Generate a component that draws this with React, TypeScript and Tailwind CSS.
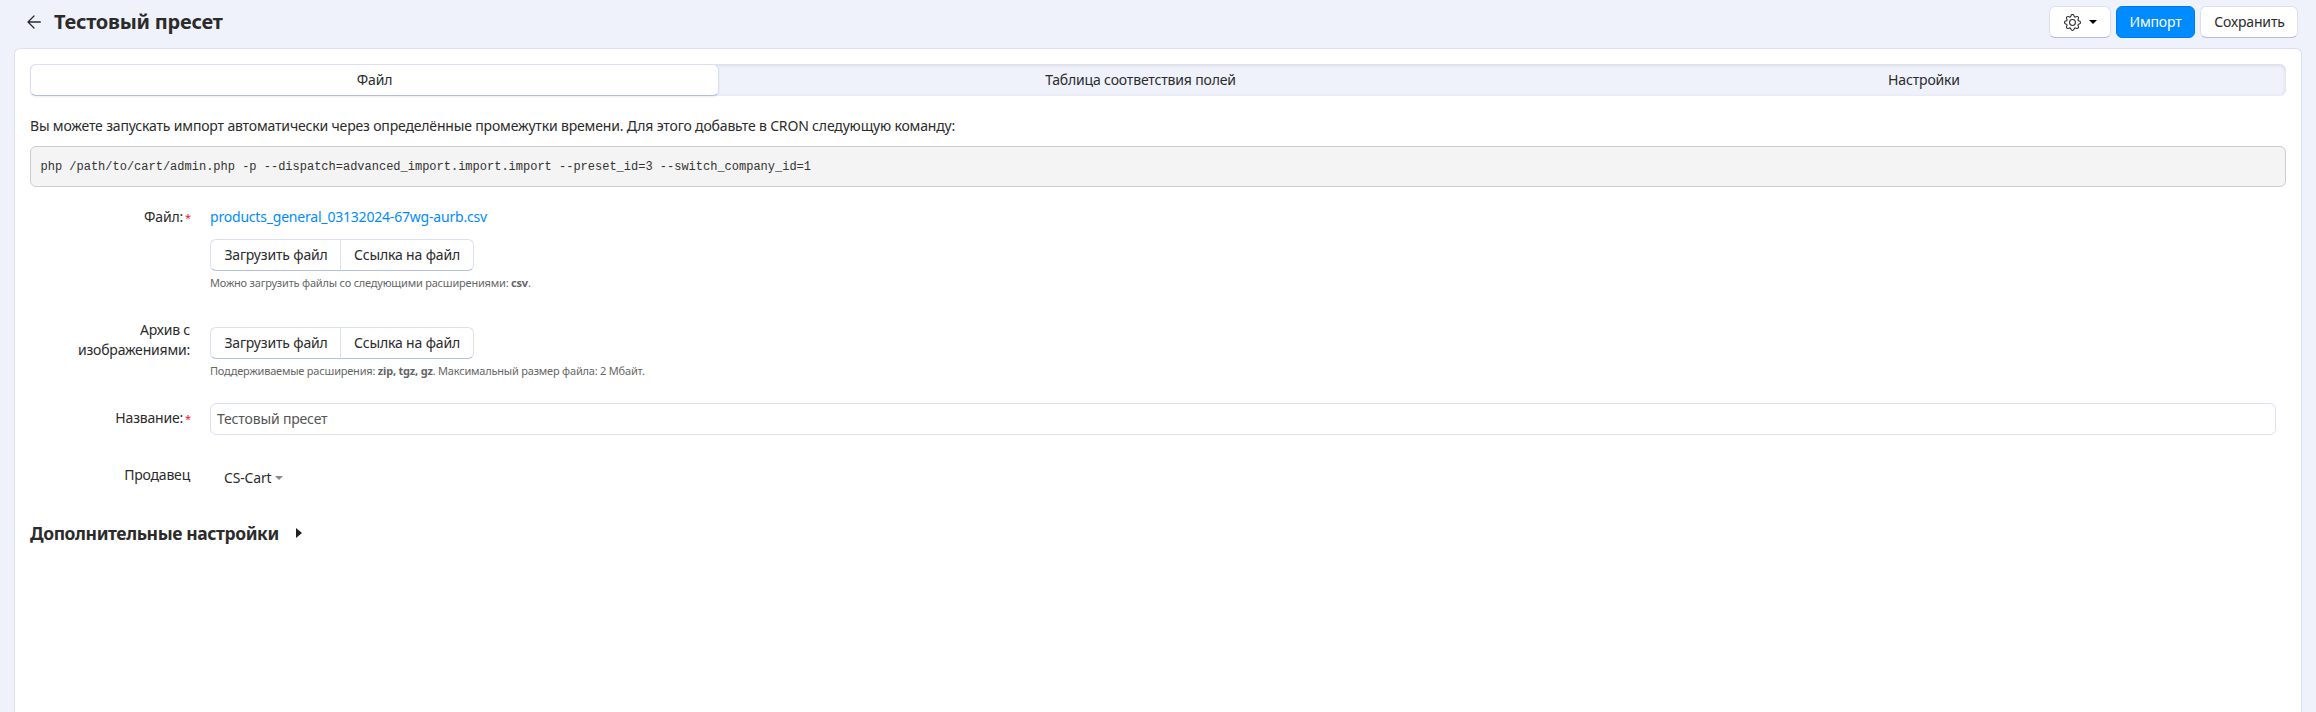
import type { ReactNode } from "react";
import { BsGear } from "react-icons/bs";

const raised = "border border-[#dbe0f0] border-b-[#b4bfdc] bg-white";

function UploadButtons() {
  return (
    <div className="flex h-8">
      <button className="h-8 w-[130px] rounded-l-[6px] border border-r-0 border-[#dbe0f0] border-b-[#b4bfdc] bg-white pl-px text-center leading-[30px] whitespace-nowrap">
        Загрузить файл
      </button>
      <button className={`h-8 w-[134px] rounded-r-[6px] text-center leading-[30px] whitespace-nowrap ${raised}`}>
        Ссылка на файл
      </button>
    </div>
  );
}

function Row({ label, required, className, children }: { label: string; required?: boolean; className: string; children: ReactNode }) {
  return (
    <div className={`flex ${className}`}>
      <label className="mr-5 w-40 shrink-0 text-right tracking-[-0.2px]">
        {label}
        {required && <span className="ml-[2px] inline-block w-[5px] text-[11px] leading-none tracking-normal text-[#f0103c]">*</span>}
      </label>
      <div className="min-w-0 flex-1">{children}</div>
    </div>
  );
}

const help = "text-[11px] leading-4 tracking-[-0.2px] text-[#666] whitespace-pre";

export default function App() {
  return (
    <div className="flex h-[712px] flex-col overflow-hidden bg-[#eff2fb] font-['Noto_Sans',sans-serif] text-[14px] leading-5 tracking-[-0.165px] text-[#2b2b2b]">
      <header className="flex h-12 shrink-0 items-start pt-[6px] pr-[18px] pl-[26px]">
        <svg className="mt-2 h-4 w-4" viewBox="0 0 16 16" fill="none" stroke="currentColor" strokeWidth="1.3" strokeLinecap="round" strokeLinejoin="round">
          <path d="M14.3 8H2.2M8 2L2 8l6 6" />
        </svg>
        <h1 className="ml-3 text-[20px] leading-8 font-bold tracking-[-0.24px]">Тестовый пресет</h1>
        <div className="ml-auto flex gap-[5px]">
          <button className={`flex h-8 w-[62px] items-center rounded-[6px] pl-[14px] ${raised}`}>
            <BsGear className="h-[17px] w-[17px]" />
            <svg className="ml-2 h-1 w-2" viewBox="0 0 8 4"><path d="M0 0h8L4 4z" fill="#000" /></svg>
          </button>
          <button className="h-8 w-[79px] rounded-[6px] border border-[#0078f5] bg-[#008cff] leading-[30px] text-white">Импорт</button>
          <button className={`h-8 w-[98px] rounded-[6px] pl-px leading-[30px] ${raised}`}>Сохранить</button>
        </div>
      </header>

      <main className="mx-[14px] flex-1 rounded-t-[6px] border border-b-0 border-[#dbe0f0] bg-white p-[15px]">
        <nav className="flex h-8 rounded-[6px] bg-[#eff2fb] text-center leading-[30px] shadow-[inset_0_1px_4px_rgba(0,0,0,0.12)]">
          <div className={`w-[689px] rounded-[6px] shadow-[0_1px_2px_rgba(80,100,160,0.12)] ${raised}`}>Файл</div>
          <div className="w-[843px] pt-px">Таблица соответствия полей</div>
          <div className="flex-1 pt-px">Настройки</div>
        </nav>

        <p className="mt-5 whitespace-nowrap">
          Вы можете запускать импорт автоматически через определённые промежутки времени. Для этого добавьте в CRON следующую команду:
        </p>
        <pre className="mt-[10px] h-[41px] rounded-[6px] border border-[#ccc] bg-[#f4f4f4] px-[9.5px] py-[9.5px] font-['Liberation_Mono',monospace] text-[12px] leading-5 tracking-normal text-[#333]">
          {"php /path/to/cart/admin.php -p --dispatch=advanced_import.import.import --preset_id=3 --switch_company_id=1"}
        </pre>

        <Row label="Файл:" required className="mt-5 h-[113px]">
          <a className="block tracking-[-0.2px] text-[#008cff]">products_general_03132024-67wg-aurb.csv</a>
          <div className="mt-3"><UploadButtons /></div>
          <p className={`mt-1 ${help}`}>Можно загрузить файлы со следующими расширениями: <b>csv</b>.</p>
        </Row>
        <Row label="Архив с изображениями:" className="h-[83px]">
          <div className="mt-[7px]"><UploadButtons /></div>
          <p className={`mt-1 ${help}`}>Поддерживаемые расширения: <b>zip, tgz, gz</b>. Максимальный размер файла: 2 Мбайт.</p>
        </Row>
        <Row label="Название:" required className="mt-[5px] h-[57px]">
          <div className="-mt-[5px] mr-[10px] h-8 rounded-[6px] border border-[#dbe0f0] bg-white pl-[6px] leading-[30px] text-[#555]">Тестовый пресет</div>
        </Row>
        <Row label="Продавец" className="h-14">
          <div className="mt-[3px] flex items-center pl-[14px]">
            CS-Cart
            <svg className="ml-1 h-1 w-2" viewBox="0 0 8 4"><path d="M0 0h8L4 4z" fill="#888" /></svg>
          </div>
        </Row>

        <h2 className="flex items-center text-[17.5px] leading-6 font-bold tracking-[-0.4px]">
          Дополнительные настройки
          <svg className="ml-[17px] h-[10px] w-[6px]" viewBox="0 0 6 10"><path d="M0 0l6 5-6 5z" fill="#222" /></svg>
        </h2>
      </main>
    </div>
  );
}
